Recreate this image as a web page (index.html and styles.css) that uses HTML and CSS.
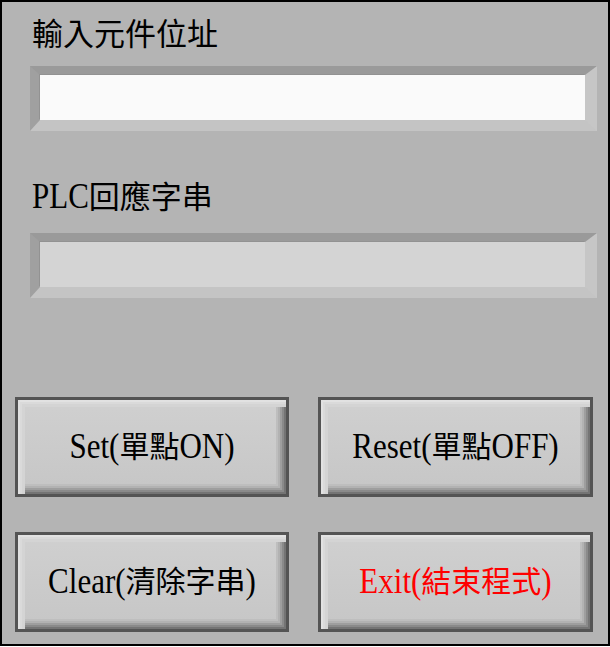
FILE: index.html
```html
<!DOCTYPE html>
<html>
<head>
<meta charset="utf-8">
<link rel="stylesheet" href="styles.css">
</head>
<body>
<div class="window">
  <div class="label label-addr">輸入元件位址</div>
  <div class="field field-input"><div class="field-inner inner-white"></div></div>
  <div class="label label-resp"><span class="lat">PLC</span>回應字串</div>
  <div class="field field-output"><div class="field-inner inner-gray"></div></div>
  <div class="buttons">
    <div class="btn"><span class="lat">Set(</span>單點<span class="lat">ON)</span></div>
    <div class="btn"><span class="lat">Reset(</span>單點<span class="lat">OFF)</span></div>
    <div class="btn"><span class="lat">Clear(</span>清除字串<span class="lat">)</span></div>
    <div class="btn btn-exit"><span class="lat">Exit(</span>結束程式<span class="lat">)</span></div>
  </div>
</div>
</body>
</html>
```

FILE: styles.css
```css
html, body {
  margin: 0;
  padding: 0;
  background: #ffffff;
}
.window {
  box-sizing: border-box;
  width: 610px;
  height: 646px;
  border: 2px solid #000;
  background: #b4b4b4;
  display: flex;
  flex-direction: column;
  font-family: "Liberation Serif", "Noto Sans CJK TC", serif;
  color: #000;
}
.lat {
  display: inline-block;
  font-family: "Liberation Serif", serif;
  font-size: 31px;
  line-height: 1;
  transform: scaleY(1.17);
  transform-origin: 50% 84%;
}
.label {
  font-size: 31px;
  line-height: 34px;
  height: 34px;
  margin-left: 30px;
}
.label-addr {
  margin-top: 16px;
}
.label-resp {
  margin-top: 50px;
}
.field {
  box-sizing: border-box;
  width: 567px;
  height: 65px;
  margin-left: 28px;
  border-style: solid;
  border-width: 9px 12px 11px 10px;
  border-color: #9a9a9a #c6c6c6 #c4c4c4 #a0a0a0;
}
.field-input {
  margin-top: 14px;
}
.field-output {
  margin-top: 18px;
}
.field-inner {
  height: 100%;
  box-shadow: -1px -1px 0 #929292;
}
.inner-white {
  background: #fafafa;
}
.inner-gray {
  background: #d4d4d4;
}
.buttons {
  display: grid;
  grid-template-columns: 274px 275px;
  grid-auto-rows: 100px;
  column-gap: 29px;
  row-gap: 35px;
  margin-top: 99px;
  margin-left: 13px;
}
.btn {
  box-sizing: border-box;
  border: 3px solid #545454;
  background: linear-gradient(#d0d0d0, #c6c6c6);
  box-shadow:
    inset 2px 2px 0 #e2e2e2,
    inset 4px 4px 0 #dadada,
    inset 7px 7px 0 #d4d4d4,
    inset -2px -2px 0 #747474,
    inset -4px -4px 0 #8a8a8a,
    inset -6px -6px 0 #9e9e9e,
    inset -8px -8px 0 #b2b2b2,
    inset -10px -10px 0 #bebebe;
  display: flex;
  align-items: center;
  justify-content: center;
  font-size: 30px;
  line-height: 1;
  color: #000;
}
.btn-exit {
  color: #ff0000;
}
```
